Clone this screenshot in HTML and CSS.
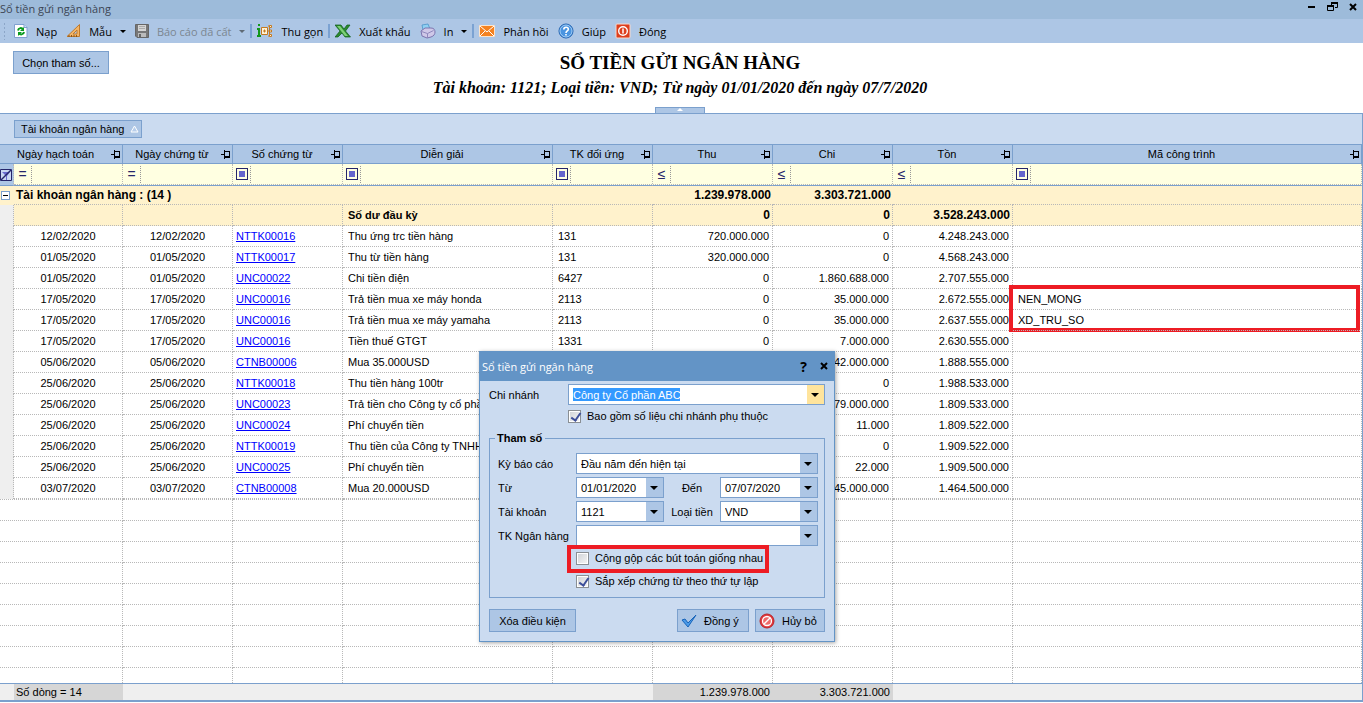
FILE: index.html
```html
<!DOCTYPE html>
<html lang="vi">
<head>
    <meta charset="UTF-8">
    <meta name="viewport" content="width=device-width, initial-scale=1.0">
    <title>Sổ tiền gửi ngân hàng</title>
    <link rel="stylesheet" href="styles.css">
</head>
<body>
    <header class="titlebar">
        <span class="titlebar-text">Sổ tiền gửi ngân hàng</span>
        <div class="window-buttons">
            <button type="button" aria-label="Thu nhỏ"><svg width="12" height="12" viewBox="0 0 12 12"><path d="M1 5h7v2H1z"/></svg></button>
            <button type="button" aria-label="Khôi phục"><svg width="12" height="12" viewBox="0 0 12 12"><path d="M4.500 4V1.500h6v5H8" fill="none" stroke="#000"/><path d="M4 1h7v2H4z"/><path d="M.5 4.500h6v5h-6z" fill="none" stroke="#000"/><path d="M0 4h7v2H0z"/></svg></button>
            <button type="button" aria-label="Đóng cửa sổ"><svg width="12" height="12" viewBox="0 0 12 12"><path d="M3 3l6 6M9 3l-6 6" stroke="#000" stroke-width="2"/></svg></button>
        </div>
    </header>

    <nav class="toolbar">
        <span class="grip"></span>
        <button type="button" class="tool">
            <svg width="14" height="16" viewBox="0 0 14 16"><path d="M.5 1.500h9.500l3 3v10H.5z" fill="#fff" stroke="#7f9fd0"/><path d="M10 1.500v3h3" fill="#cfe0f6" stroke="#7f9fd0"/><path d="M4 7.500c.5-3 4-3 5-1" fill="none" stroke="#0a9a1e" stroke-width="2"/><path d="M10 4v4H6z" fill="#0a9a1e"/><path d="M10 9c-.5 3-4 3-5 1" fill="none" stroke="#0a9a1e" stroke-width="2"/><path d="M4 13V9h4z" fill="#0a9a1e"/></svg>
            Nạp
        </button>
        <button type="button" class="tool">
            <svg width="15" height="16" viewBox="0 0 15 16"><path d="M1 13.500L13.500 1.500v12z" fill="#f4b567" stroke="#c07a2c"/><path d="M7 11l4-4v4z" fill="#adc6e5" stroke="#c07a2c"/><path d="M3 14v-2M5.500 14v-2M8 14v-2M10.500 14v-2" stroke="#8a5518"/></svg>
            Mẫu
            <i class="caret"></i>
        </button>
        <button type="button" class="tool" disabled>
            <svg width="14" height="16" viewBox="0 0 14 16"><path d="M.5 1.500h13v13H2l-1.500-1.500z" fill="#777" stroke="#666"/><path d="M3 2h8v6H3z" fill="#d5d5d5"/><path d="M4 3h6v1H4zM4 5h6v1H4z" fill="#aaa"/><path d="M3 10h8v4H3z" fill="#bbb"/><path d="M4 11h2v3H4z" fill="#666"/></svg>
            Báo cáo đã cất
            <i class="caret"></i>
        </button>
        <span class="sep"></span>
        <button type="button" class="tool">
            <svg width="16" height="16" viewBox="0 0 16 16"><path d="M1 1h2v2H1zM0 5h3v7h1v2H0v-2h1V7H0z" fill="#13971a"/><path d="M4.500 4.500h6v7h-6z" fill="#fff3d6" stroke="#c47a22"/><path d="M6 8h3M7.500 6.500v3M10.500 8h2M12.500 3v10M11 3h2M11 13h2" stroke="#c47a22" fill="none"/><path d="M12.500 2.500h2v2h-2zM12.500 7h2v2h-2zM12.500 11.500h2v2h-2z" fill="#fff3d6" stroke="#c47a22"/></svg>
            Thu gọn
        </button>
        <span class="sep"></span>
        <button type="button" class="tool">
            <svg width="16" height="16" viewBox="0 0 16 16"><path d="M0 2h6l3 4 3-4h3l-4.500 6 5 6H10L7 10l-4 4H0l5-6z" fill="#2c8a2f" stroke="#0f5c17" stroke-width=".7"/><path d="M2 3l8 10h3L5 3z" fill="#7ed077"/></svg>
            Xuất khẩu
        </button>
        <button type="button" class="tool">
            <svg width="16" height="16" viewBox="0 0 16 16"><path d="M3 7L2 2l6-1 2 5z" fill="#8fd0f2" stroke="#4b93c8" stroke-width=".8"/><path d="M1 8l4-3h6c3 0 4 2 4 4s-1 4-4 5l-4 1-5-2z" fill="#cfc8e8" stroke="#7c74ae"/><path d="M1.500 8.500l6 2 6-3M7.500 10.500V15" fill="none" stroke="#8f88bd"/></svg>
            In
            <i class="caret"></i>
        </button>
        <span class="sep"></span>
        <button type="button" class="tool">
            <svg width="16" height="16" viewBox="0 0 16 16"><path d="M.5 2.500h15v11H.5z" fill="#f58220" stroke="#fbe3cb"/><path d="M1 3l7 6 7-6M1 13l5-5M15 13l-5-5" fill="none" stroke="#fff"/></svg>
            Phản hồi
        </button>
        <button type="button" class="tool">
            <svg width="16" height="16" viewBox="0 0 16 16"><circle cx="8" cy="8" r="7" fill="#4a94e0" stroke="#1e5fae"/><circle cx="8" cy="8" r="6" fill="none" stroke="#b9dcfa" stroke-width=".8"/><path d="M5.800 6.500c0-3 4.500-3 4.500-.3C10.300 8 8 7.800 8 10" fill="none" stroke="#fff" stroke-width="1.600"/><path d="M7.200 11h1.600v1.600H7.200z" fill="#fff"/></svg>
            Giúp
        </button>
        <button type="button" class="tool">
            <svg width="16" height="16" viewBox="0 0 16 16"><rect x="1" y="1" width="14" height="14" rx="1" fill="#dd3f1d" stroke="#f7d9cf"/><circle cx="8" cy="8" r="4.300" fill="none" stroke="#fff" stroke-width="1.400"/><path d="M8 5.500v5" stroke="#fff" stroke-width="1.500"/></svg>
            Đóng
        </button>
    </nav>

    <section class="report-head">
        <button type="button" class="btn choose">Chọn tham số...</button>
        <h1>SỔ TIỀN GỬI NGÂN HÀNG</h1>
        <p>Tài khoản: 1121; Loại tiền: VND; Từ ngày 01/01/2020 đến ngày 07/7/2020</p>
        <button type="button" class="collapse" aria-label="Thu gọn tiêu đề"></button>
    </section>

    <main class="grid">
        <div class="group-panel">
            <button type="button" class="group-chip">Tài khoản ngân hàng
                <svg width="9" height="8" viewBox="0 0 9 8"><path d="M4.500 1L8 7H1z" fill="#b7cdea" stroke="#fff"/></svg>
            </button>
        </div>

        <table>
            <colgroup>
                <col class="c-gutter"><col class="c-posted"><col class="c-date"><col class="c-date">
                <col class="c-desc"><col class="c-acct"><col class="c-money"><col class="c-money"><col class="c-money"><col>
            </colgroup>
            <thead>
                <tr class="head-row" id="headRow"></tr>
                <tr class="filter-row" id="filterRow">
                    <td class="filter-icon"><svg width="12" height="14" viewBox="0 0 12 14"><path d="M.5 1.500h11v11H.5z" fill="#c9d6f2" stroke="#26266b"/><path d="M2 4h8L7 8v4H6V8z" fill="#6a6ad0"/><path d="M1 12L11 2" stroke="#26266b" stroke-width="1.500"/></svg></td>
                </tr>
            </thead>
            <tbody id="rows">
                <tr class="group-row">
                    <td><button type="button" class="expander" aria-label="Thu gọn nhóm"></button></td>
                    <td colspan="5">Tài khoản ngân hàng : (14 )</td>
                    <td class="num">1.239.978.000</td>
                    <td class="num">3.303.721.000</td>
                    <td></td>
                    <td></td>
                </tr>
                <tr class="balance-row">
                    <td class="gutter"></td>
                    <td></td>
                    <td></td>
                    <td></td>
                    <td>Số dư đầu kỳ</td>
                    <td></td>
                    <td class="num">0</td>
                    <td class="num">0</td>
                    <td class="num">3.528.243.000</td>
                    <td></td>
                </tr>
            </tbody>
            <tbody id="blankRows" class="blank"></tbody>
            <tfoot>
                <tr>
                    <td></td>
                    <td class="total count">Số dòng = 14</td>
                    <td colspan="4"></td>
                    <td class="total num">1.239.978.000</td>
                    <td class="total num">3.303.721.000</td>
                    <td colspan="2"></td>
                </tr>
            </tfoot>
        </table>
    </main>

    <form class="dialog" role="dialog" aria-labelledby="dialogTitle">
        <div class="dialog-title">
            <span id="dialogTitle">Sổ tiền gửi ngân hàng</span>
            <button type="button" class="dialog-help" aria-label="Trợ giúp">?</button>
            <button type="button" aria-label="Đóng hộp thoại"><svg width="9" height="9" viewBox="0 0 9 9"><path d="M1 1l6 6M7 1L1 7" stroke="#000" stroke-width="2"/></svg></button>
        </div>
        <div class="dialog-body">
            <div class="branch-row">
                <label for="branch">Chi nhánh</label>
                <div class="combo active"><select id="branch" class="selected-text"><option>Công ty Cổ phần ABC</option></select></div>
            </div>
            <label class="check branch-check"><input type="checkbox" checked>Bao gồm số liệu chi nhánh phụ thuộc</label>

            <fieldset>
                <legend>Tham số</legend>
                <div class="params">
                    <label for="period">Kỳ báo cáo</label>
                    <div class="combo wide"><select id="period"><option>Đầu năm đến hiện tại</option></select></div>

                    <label for="from">Từ</label>
                    <div class="combo"><select id="from"><option>01/01/2020</option></select></div>
                    <label for="to" class="mid">Đến</label>
                    <div class="combo"><select id="to"><option>07/07/2020</option></select></div>

                    <label for="account">Tài khoản</label>
                    <div class="combo"><select id="account"><option>1121</option></select></div>
                    <label for="currency" class="mid">Loại tiền</label>
                    <div class="combo"><select id="currency"><option>VND</option></select></div>

                    <label for="bank">TK Ngân hàng</label>
                    <div class="combo wide"><select id="bank"><option></option></select></div>

                    <div class="check-cell">
                        <label class="check"><input type="checkbox">Cộng gộp các bút toán giống nhau</label>
                        <span class="mark mark-check"></span>
                    </div>
                    <div class="check-cell">
                        <label class="check"><input type="checkbox" checked>Sắp xếp chứng từ theo thứ tự lập</label>
                    </div>
                </div>
            </fieldset>

            <div class="dialog-actions">
                <button type="button" class="btn clear">Xóa điều kiện</button>
                <button type="submit" class="btn icon-btn ok">
                    <svg width="16" height="14" viewBox="0 0 16 14"><path d="M1 6l3-1 3 4 8-8-8 12z" fill="#4b9be8" stroke="#1763b8"/></svg>
                    Đồng ý
                </button>
                <button type="button" class="btn icon-btn cancel">
                    <svg width="16" height="16" viewBox="0 0 16 16"><circle cx="8" cy="8" r="7" fill="#e2373b" stroke="#b9272c"/><circle cx="8" cy="8" r="4.500" fill="#ee6a6a" stroke="#fff" stroke-width="1.300"/><path d="M5 11l6-6" stroke="#fff" stroke-width="1.500"/></svg>
                    Hủy bỏ
                </button>
            </div>
        </div>
    </form>

    <script>
        const columns = [
            { title: 'Ngày hạch toán', op: 'eq' },
            { title: 'Ngày chứng từ', op: 'eq' },
            { title: 'Số chứng từ', op: 'box' },
            { title: 'Diễn giải', op: 'box' },
            { title: 'TK đối ứng', op: 'box' },
            { title: 'Thu', op: 'le' },
            { title: 'Chi', op: 'le' },
            { title: 'Tồn', op: 'le' },
            { title: 'Mã công trình', op: 'box' }
        ];

        // date, voucher, description, account, in, out, balance, project
        const entries = [
            ['12/02/2020', 'NTTK00016', 'Thu ứng trc tiền hàng', '131', '720.000.000', '0', '4.248.243.000', ''],
            ['01/05/2020', 'NTTK00017', 'Thu từ tiền hàng', '131', '320.000.000', '0', '4.568.243.000', ''],
            ['01/05/2020', 'UNC00022', 'Chi tiền điện', '6427', '0', '1.860.688.000', '2.707.555.000', ''],
            ['17/05/2020', 'UNC00016', 'Trả tiền mua xe máy honda', '2113', '0', '35.000.000', '2.672.555.000', 'NEN_MONG'],
            ['17/05/2020', 'UNC00016', 'Trả tiền mua xe máy yamaha', '2113', '0', '35.000.000', '2.637.555.000', 'XD_TRU_SO'],
            ['17/05/2020', 'UNC00016', 'Tiền thuế GTGT', '1331', '0', '7.000.000', '2.630.555.000', ''],
            ['05/06/2020', 'CTNB00006', 'Mua 35.000USD', '', '', '42.000.000', '1.888.555.000', ''],
            ['25/06/2020', 'NTTK00018', 'Thu tiền hàng 100tr', '', '', '0', '1.988.533.000', ''],
            ['25/06/2020', 'UNC00023', 'Trả tiền cho Công ty cổ phần', '', '', '79.000.000', '1.809.533.000', ''],
            ['25/06/2020', 'UNC00024', 'Phí chuyển tiền', '', '', '11.000', '1.809.522.000', ''],
            ['25/06/2020', 'NTTK00019', 'Thu tiền của Công ty TNHH', '', '', '0', '1.909.522.000', ''],
            ['25/06/2020', 'UNC00025', 'Phí chuyển tiền', '', '', '22.000', '1.909.500.000', ''],
            ['03/07/2020', 'CTNB00008', 'Mua 20.000USD', '', '', '45.000.000', '1.464.500.000', '']
        ];

        const ops = { eq: '=', le: '≤', box: '<i class="op-box"></i>' };
        const pin = '<svg width="9" height="9" viewBox="0 0 9 9"><path d="M0 4h3v1H0zM3 0h1v9H3zM4 1h5v1H4zM8 1h1v6H8zM4 6h5v2H4z"/></svg>';

        columns.forEach(function(col, i) {
            document.getElementById('headRow').insertAdjacentHTML('beforeend',
                `<th${i === 0 ? ' colspan="2"' : ''}><div class="th"><span>${col.title}</span>${pin}</div></th>`);
            document.getElementById('filterRow').insertAdjacentHTML('beforeend',
                `<td><div class="filter"><span class="op">${ops[col.op]}</span><input type="text" aria-label="Lọc ${col.title}"></div></td>`);
        });

        entries.forEach(function(e) {
            const mark = e[7] === 'NEN_MONG' ? '<span class="mark mark-project"></span>' : '';
            document.getElementById('rows').insertAdjacentHTML('beforeend', `
                <tr>
                    <td class="gutter"></td>
                    <td class="date">${e[0]}</td>
                    <td class="date">${e[0]}</td>
                    <td class="voucher"><a href="#">${e[1]}</a></td>
                    <td>${e[2]}</td>
                    <td>${e[3]}</td>
                    <td class="num">${e[4]}</td>
                    <td class="num">${e[5]}</td>
                    <td class="num">${e[6]}</td>
                    <td class="project">${e[7]}${mark}</td>
                </tr>`);
        });

        for (let i = 0; i < 9; i++) {
            document.getElementById('blankRows').insertAdjacentHTML('beforeend',
                '<tr><td colspan="2"></td>' + '<td></td>'.repeat(8) + '</tr>');
        }
    </script>
</body>
</html>
```
FILE: styles.css
```css
* {
    box-sizing: border-box;
}
body {
    margin: 0;
    min-height: 100vh;
    position: relative;
    background-color: white;
    color: #000;
    font-family: "Liberation Sans", Arial, sans-serif;
    font-size: 11px;
}
button, input, select {
    font: inherit;
    color: inherit;
    margin: 0;
}
button {
    padding: 0;
    border: none;
    background: none;
}

/* window title */
.titlebar {
    display: flex;
    justify-content: space-between;
    height: 19px;
    line-height: 18px;
    background-color: #9dbbda;
    color: #3c4654;
    font-family: "Open Sans", "Noto Sans", sans-serif;
    font-size: 11px;
}
.window-buttons {
    display: flex;
    gap: 8px;
    padding: 1px 4px 0 0;
}
.window-buttons button {
    display: flex;
    height: 12px;
}

/* toolbar */
.toolbar {
    display: flex;
    align-items: center;
    height: 24px;
    padding-left: 3px;
    background-color: #adc6e5;
    font-family: "Open Sans", "Noto Sans", sans-serif;
    font-size: 11px;
}
.grip {
    width: 3px;
    height: 18px;
    margin-right: 8px;
    background: radial-gradient(#8ca6c8 1px, transparent 1px) 0 0 / 3px 4px;
}
.tool {
    display: flex;
    align-items: center;
    gap: 8px;
    margin-right: 9px;
    white-space: nowrap;
}
.tool:disabled {
    color: #7c8791;
}
.caret {
    border: 3px solid transparent;
    border-top-color: #000;
    border-bottom: 0;
}
.tool:disabled .caret {
    border-top-color: #5f6a75;
}
.sep {
    width: 2px;
    height: 14px;
    margin: 0 5px 0 -4px;
    background-color: #7ba2d2;
}

/* report heading */
.report-head {
    position: relative;
    height: 71px;
    padding: 8px 3px 0 0;
    border-bottom: 1px solid #7ba0cd;
    font-family: "Liberation Serif", "Times New Roman", serif;
    text-align: center;
}
.report-head h1 {
    margin: 0;
    font-size: 19px;
    line-height: 24px;
}
.report-head p {
    margin: 3px 0 0;
    font-size: 16px;
    font-weight: bold;
    font-style: italic;
    line-height: 20px;
}
.btn {
    display: flex;
    align-items: center;
    justify-content: center;
    gap: 7px;
    height: 23px;
    border: 1px solid #7ba0cd;
    background-color: #adc6e5;
}
.choose {
    position: absolute;
    top: 8px;
    left: 13px;
    width: 96px;
    font-family: "Liberation Sans", Arial, sans-serif;
    font-size: 11px;
}
.collapse {
    position: absolute;
    bottom: 0;
    left: 50%;
    width: 50px;
    height: 6px;
    margin-left: -27px;
    border: 1px solid #7ba0cd;
    border-bottom: none;
    background-color: #adc6e5;
}
.collapse::after {
    content: "";
    position: absolute;
    left: 21px;
    top: 0;
    border: 3px solid transparent;
    border-bottom-color: white;
    border-top: 0;
}

/* grid */
.grid {
    border-right: 1px solid #7ba0cd;
    border-bottom: 2px solid #7ba0cd;
}
.group-panel {
    height: 30px;
    padding: 6px 14px;
    background-color: #cbdbf0;
}
.group-chip {
    display: flex;
    align-items: center;
    gap: 6px;
    height: 18px;
    padding: 0 2px 0 6px;
    border: 1px solid #7ba0cd;
    background-color: #adc6e5;
}
table {
    width: 100%;
    table-layout: fixed;
    border-collapse: separate;
    border-spacing: 0;
}
.c-gutter { width: 14px; }
.c-posted { width: 109px; }
.c-date { width: 110px; }
.c-desc { width: 210px; }
.c-acct { width: 100px; }
.c-money { width: 120px; }
th {
    height: 20px;
    padding: 0;
    border: solid #7ba0cd;
    border-width: 1px 1px 1px 0;
    background-color: #adc6e5;
    font-weight: normal;
}
.th {
    display: flex;
    align-items: center;
    padding-right: 2px;
}
.th span {
    flex: 1;
}
td {
    height: 21px;
    padding: 0 5px;
    border: dotted #b8b8b8;
    border-width: 0 1px 1px 0;
    white-space: nowrap;
    overflow: hidden;
}
.date {
    text-align: center;
}
.voucher {
    padding-left: 3px;
}
.voucher a {
    color: #0000ff;
}
.num {
    padding-right: 3px;
    text-align: right;
}
.gutter {
    background-color: #efefef;
    border-bottom: none;
}
.filter-row td {
    height: 22px;
    padding: 0;
    border-right: 1px dotted #b8b8b8;
    border-bottom: 1px solid #7ba0cd;
    background-color: #ffffe1;
}
.filter-row .filter-icon {
    background-color: #adc6e5;
}
.filter-icon svg {
    display: block;
}
.filter {
    display: flex;
    height: 20px;
    padding: 1px 0;
    border-bottom: 1px dotted #b8b8b8;
}
.op {
    flex: 0 0 18px;
    display: flex;
    align-items: center;
    justify-content: center;
    border-right: 1px dotted #999;
    color: #26266b;
    font-size: 14px;
}
.op-box {
    width: 12px;
    height: 12px;
    border: 1px solid #26266b;
    background: #6666cc content-box;
    padding: 2px;
}
.filter input {
    flex: 1;
    min-width: 0;
    padding: 0 2px;
    border: none;
    background: none;
}
.group-row td {
    height: 19px;
    padding: 0 2px 1px;
    border-right: none;
    background-color: #fff2cc;
    font-size: 12px;
    font-weight: bold;
}
.group-row td:first-child {
    padding: 0 0 1px 1px;
    border-bottom: none;
}
.expander {
    display: block;
    position: relative;
    width: 9px;
    height: 9px;
    border: 1px solid #7ba0cd;
    background: white;
}
.expander::after {
    content: "";
    position: absolute;
    left: 1px;
    top: 3px;
    width: 5px;
    height: 1px;
    background: #000;
}
.balance-row td:not(.gutter) {
    background-color: #fff2cc;
    font-weight: bold;
}
.balance-row .num {
    padding-right: 2px;
    font-size: 12px;
}
.blank tr:first-child td {
    height: 22px;
    border-top: 1px dotted #b8b8b8;
}
.blank tr:last-child td {
    height: 15px;
    border-bottom: none;
}
tfoot td {
    height: 17px;
    border: none;
    border-top: 1px solid #7ba0cd;
    background-color: #efefef;
}
tfoot .total {
    background-color: #d6d6d6;
}
tfoot .count {
    padding-left: 2px;
}

/* red highlight frames */
.mark {
    position: absolute;
    border: 4px solid #ed1c24;
    pointer-events: none;
}
.project {
    position: relative;
    overflow: visible;
}
.mark-project {
    top: -4px;
    left: -4px;
    right: 1px;
    height: 47px;
}
.mark-check {
    top: -4px;
    left: -9px;
    width: 202px;
    height: 28px;
}

/* parameter dialog */
.dialog {
    position: absolute;
    top: 351px;
    left: 479px;
    width: 356px;
    border: 1px solid #6394c6;
    background-color: #cbdbf0;
    box-shadow: 1px 1px 4px rgba(0,0,0,0.35);
}
.dialog-title {
    display: flex;
    align-items: center;
    gap: 13px;
    height: 29px;
    padding: 0 5px 0 2px;
    background-color: #6394c6;
    color: white;
    font-family: "Open Sans", "Noto Sans", sans-serif;
    font-size: 11px;
}
.dialog-title span {
    flex: 1;
}
.dialog-title button {
    display: flex;
    color: #000;
}
.dialog-title .dialog-help {
    font-size: 14px;
    font-weight: bold;
}
.dialog-body {
    padding: 3px 9px 9px;
}
.branch-row {
    display: grid;
    grid-template-columns: 79px 1fr;
    align-items: center;
}
.combo {
    position: relative;
    display: flex;
    height: 21px;
    border: 1px solid #7ba0cd;
    background: white;
}
.combo::after {
    content: "";
    position: absolute;
    right: 5px;
    top: 8px;
    border: 4px solid transparent;
    border-top-color: #000;
    border-bottom: 0;
    pointer-events: none;
}
.combo select {
    flex: 1;
    min-width: 0;
    padding: 0 17px 0 4px;
    border: none;
    border-radius: 0;
    appearance: none;
    background: linear-gradient(#adc6e5, #adc6e5) right / 17px 100% no-repeat white;
}
.combo .selected-text {
    color: white;
    background:
        linear-gradient(#ffe49c, #ffe49c) right / 17px 100% no-repeat,
        linear-gradient(#3399ff, #3399ff) 4px 50% / 107px 13px no-repeat,
        white;
}
.check {
    display: flex;
    align-items: center;
    gap: 6px;
    height: 18px;
}
.check input {
    appearance: none;
    width: 13px;
    height: 13px;
    border: 1px solid #8a8f94;
    outline: 1px solid white;
    outline-offset: -2px;
    background: linear-gradient(135deg, #cfd2d6, #f6f6f6);
}
.check input:checked::after {
    content: "";
    display: block;
    width: 4px;
    height: 8px;
    margin: 0 0 0 4px;
    border: solid #3d4f9a;
    border-width: 0 2px 2px 0;
    transform: rotate(35deg);
}
.branch-check {
    margin: 2px 0 6px 79px;
}
fieldset {
    margin: 0;
    padding: 8px 6px 5px 8px;
    border: 1px solid #7ba0cd;
}
legend {
    margin-left: -3px;
    padding: 0 3px 0 2px;
    font-weight: bold;
    line-height: 14px;
}
.params {
    display: grid;
    grid-template-columns: 78px 88px 56px 98px;
    row-gap: 3px;
    align-items: center;
}
.params .wide {
    grid-column: 2 / -1;
}
.params .mid {
    text-align: center;
}
.check-cell {
    grid-column: 2 / -1;
    position: relative;
    height: 20px;
}
.dialog-actions {
    display: flex;
    gap: 6px;
    margin-top: 11px;
}
.clear {
    width: 87px;
    margin-right: auto;
}
.icon-btn {
    justify-content: flex-start;
    padding-left: 3px;
}
.ok {
    width: 72px;
}
.cancel {
    width: 70px;
}
```
